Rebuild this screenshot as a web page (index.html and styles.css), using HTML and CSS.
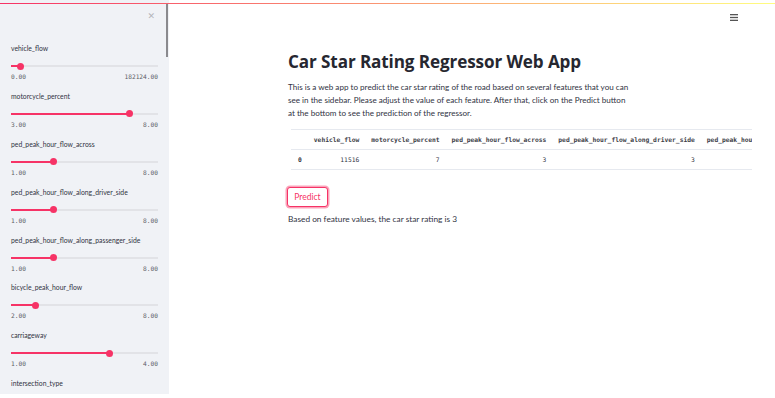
FILE: index.html
```html
<!DOCTYPE html>
<html>
<head>
<meta charset="utf-8">
<link rel="stylesheet" href="styles.css">
</head>
<body>
<div class="deco"></div>
<div class="app">
  <aside class="sidebar">
    <div class="scrollbar"></div>
    <div class="close">&#x2715;</div>
    <div class="fields">
      <div class="field">
        <div class="label">vehicle_flow</div>
        <div class="slider"><div class="fill" style="width:9px"></div><div class="thumb"></div><div class="rest"></div></div>
        <div class="range"><span>0.00</span><span>182124.00</span></div>
      </div>
      <div class="field">
        <div class="label">motorcycle_percent</div>
        <div class="slider"><div class="fill" style="width:118px"></div><div class="thumb"></div><div class="rest"></div></div>
        <div class="range"><span>3.00</span><span>8.00</span></div>
      </div>
      <div class="field">
        <div class="label">ped_peak_hour_flow_across</div>
        <div class="slider"><div class="fill" style="width:42px"></div><div class="thumb"></div><div class="rest"></div></div>
        <div class="range"><span>1.00</span><span>8.00</span></div>
      </div>
      <div class="field">
        <div class="label">ped_peak_hour_flow_along_driver_side</div>
        <div class="slider"><div class="fill" style="width:42px"></div><div class="thumb"></div><div class="rest"></div></div>
        <div class="range"><span>1.00</span><span>8.00</span></div>
      </div>
      <div class="field">
        <div class="label">ped_peak_hour_flow_along_passenger_side</div>
        <div class="slider"><div class="fill" style="width:42px"></div><div class="thumb"></div><div class="rest"></div></div>
        <div class="range"><span>1.00</span><span>8.00</span></div>
      </div>
      <div class="field">
        <div class="label">bicycle_peak_hour_flow</div>
        <div class="slider"><div class="fill" style="width:24px"></div><div class="thumb"></div><div class="rest"></div></div>
        <div class="range"><span>2.00</span><span>8.00</span></div>
      </div>
      <div class="field">
        <div class="label">carriageway</div>
        <div class="slider"><div class="fill" style="width:98px"></div><div class="thumb"></div><div class="rest"></div></div>
        <div class="range"><span>1.00</span><span>4.00</span></div>
      </div>
      <div class="field">
        <div class="label">intersection_type</div>
      </div>
    </div>
  </aside>
  <main class="main">
    <svg class="menu" width="8" height="7" viewBox="0 0 8 7"><rect x="0" y="0" width="8" height="1.3" fill="#555"/><rect x="0" y="2.85" width="8" height="1.3" fill="#555"/><rect x="0" y="5.7" width="8" height="1.3" fill="#555"/></svg>
    <div class="content">
      <h1 class="title">Car Star Rating Regressor Web App</h1>
      <p class="intro">This is a web app to predict the car star rating of the road based on several features that you can<br>see in the sidebar. Please adjust the value of each feature. After that, click on the Predict button<br>at the bottom to see the prediction of the regressor.</p>
      <div class="table-wrap">
        <table class="df">
          <thead>
            <tr><th class="idx"></th><th>vehicle_flow</th><th>motorcycle_percent</th><th>ped_peak_hour_flow_across</th><th>ped_peak_hour_flow_along_driver_side</th><th>ped_peak_hou</th></tr>
          </thead>
          <tbody>
            <tr><td class="idx">0</td><td>11516</td><td>7</td><td>3</td><td>3</td><td></td></tr>
          </tbody>
        </table>
      </div>
      <button class="predict">Predict</button>
      <p class="result">Based on feature values, the car star rating is 3</p>
    </div>
  </main>
</div>
</body>
</html>
```

FILE: styles.css
```css
* { box-sizing: border-box; }
html, body { margin: 0; padding: 0; background: #fff; }
body {
  width: 775px;
  height: 398px;
  overflow: hidden;
  font-family: Lato, "Open Sans", sans-serif;
  color: #262730;
  position: relative;
}
.deco {
  position: absolute;
  top: 3px;
  left: 0;
  width: 775px;
  height: 1px;
  background: linear-gradient(90deg, rgb(246, 51, 102), rgb(255, 253, 128));
  z-index: 5;
}
.app {
  display: flex;
  height: 394px;
}
.sidebar {
  position: relative;
  width: 169px;
  flex: none;
  background: #f0f2f6;
  padding: 0 11px 0 11px;
  overflow: hidden;
}
.scrollbar {
  position: absolute;
  left: 166px;
  top: 4px;
  width: 2px;
  height: 53px;
  background: #8a8a8e;
}
.close {
  height: 43px;
  padding-top: 11px;
  text-align: right;
  font-family: "DejaVu Sans", sans-serif;
  font-size: 9px;
  font-weight: bold;
  color: #b4b5ba;
  margin-right: 3px;
}
.field {
  height: 47.9px;
}
.label {
  font-size: 6.8px;
  line-height: 10px;
  color: #31333f;
  white-space: nowrap;
}
.slider {
  display: flex;
  align-items: center;
  height: 14px;
  margin-top: 6px;
}
.fill {
  height: 2px;
  background: #f63366;
  flex: none;
}
.thumb {
  width: 7px;
  height: 7px;
  border-radius: 50%;
  background: #f63366;
  flex: none;
  margin: 0 -3.5px;
  position: relative;
  z-index: 1;
}
.rest {
  flex: 1;
  height: 2px;
  background: #e2e3e7;
}
.range {
  display: flex;
  justify-content: space-between;
  font-family: "DejaVu Sans Mono", "Liberation Mono", monospace;
  font-size: 6.2px;
  line-height: 8px;
  color: #5c5d66;
  margin-top: 0;
}
.main {
  flex: 1;
  min-width: 0;
  position: relative;
}
.menu {
  position: absolute;
  right: 37px;
  top: 14px;
}
.content {
  padding: 49px 0 0 119px;
}
.title {
  margin: 0;
  font-family: "Open Sans", sans-serif;
  font-weight: 700;
  font-size: 17.1px;
  line-height: 25px;
  letter-spacing: -0.1px;
  color: #262730;
}
.intro {
  margin: 7px 0 0 0;
  font-size: 8.1px;
  line-height: 13px;
  color: #31333f;
}
.table-wrap {
  width: 461px;
  overflow: hidden;
  margin: 9px 0 0 3px;
}
.df {
  border-collapse: collapse;
  font-family: "DejaVu Sans Mono", "Liberation Mono", monospace;
  font-size: 6.3px;
  color: #31333f;
  white-space: nowrap;
}
.df th, .df td {
  text-align: right;
  padding: 0 6px;
  height: 20px;
  line-height: 19px;
  border-top: 1px solid #e6e9ef;
  border-bottom: 1px solid #e6e9ef;
}
.df th { font-weight: 600; color: #3d3e48; }
.df th:last-child { text-align: left; }
.df .idx { text-align: left; padding-left: 7px; width: 16px; font-weight: 600; }
.predict {
  display: block;
  margin: 17px 0 0 -1px;
  width: 41px;
  height: 20px;
  padding: 0;
  background: #fff;
  border: 1.5px solid #f63366;
  border-radius: 3px;
  box-shadow: 0 0 0 1.5px rgba(246, 51, 102, 0.45);
  color: #f63366;
  font-family: Lato, sans-serif;
  font-size: 8.5px;
}
.result {
  margin: 7px 0 0 0;
  font-size: 8.3px;
  line-height: 11px;
  color: #31333f;
}
```
